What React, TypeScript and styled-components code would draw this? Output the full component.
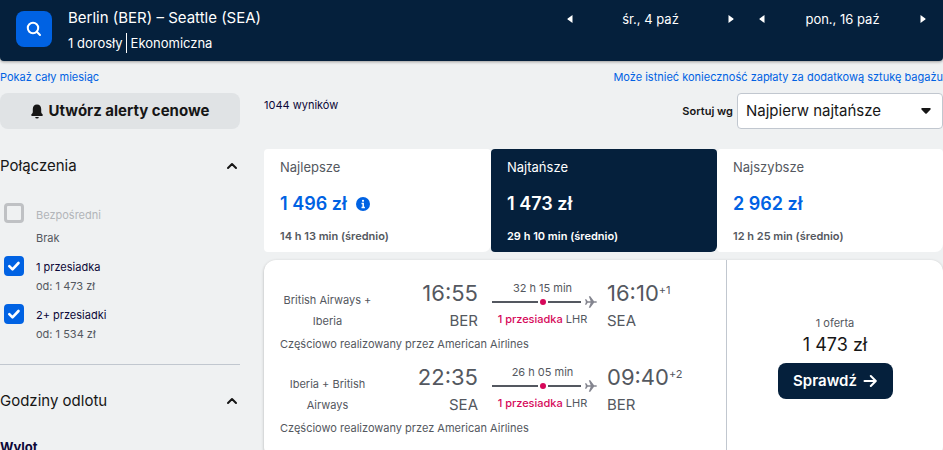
import React from 'react';
import styled, { createGlobalStyle } from 'styled-components';

const color = {
  navy: '#05203c',
  blue: '#0062e3',
  page: '#eff1f2',
  text: '#161616',
  muted: '#545860',
  pink: '#d6085a',
  line: '#c1c7cf',
};

const GlobalStyle = createGlobalStyle`
  *, *::before, *::after { box-sizing: border-box; }
  body {
    margin: 0;
    overflow-x: hidden;
    background: ${color.page};
    color: ${color.text};
    font-family: Inter, "Liberation Sans", sans-serif;
    font-size: 12px;
    line-height: 20px;
  }
  h1, h2, h3, p { margin: 0; font-weight: 400; }
  button, select, input { font: inherit; color: inherit; margin: 0; }
  button { border: 0; padding: 0; background: none; cursor: pointer; }
  svg { display: block; flex: none; }
`;

const Page = styled.div`
  min-height: 100vh;
`;

const Header = styled.header`
  display: flex;
  align-items: flex-start;
  min-height: 61px;
  padding: 6px 12px 6px 16px;
  background: ${color.navy};
  color: #fff;
  border-radius: 0 0 4px 4px;
  box-shadow: 0 1px 3px rgba(37, 32, 31, 0.4);
`;

const SearchButton = styled.button`
  display: grid;
  place-items: center;
  width: 36px;
  height: 36px;
  margin-top: 5px;
  border-radius: 8px;
  background: ${color.blue};
`;

const Trip = styled.div`
  flex: 1;
  margin-left: 16px;
  white-space: nowrap;
`;

const Route = styled.h1`
  font-size: 15px;
  line-height: 24px;
`;

const TripDetails = styled.p`
  display: flex;
  gap: 3px;
  margin-top: 3px;
  font-size: 13px;
`;

const Cabin = styled.span`
  padding-left: 4px;
  border-left: 1px solid #fff;
`;

const Dates = styled.div`
  display: flex;
  gap: 15px;
`;

const DatePicker = styled.div`
  display: flex;
  align-items: center;
  justify-content: space-between;
  width: 177px;
  height: 26px;
  font-size: 13px;
`;

const StepButton = styled.button`
  display: grid;
  place-items: center;
  width: 16px;
  height: 16px;
`;

const LinkRow = styled.nav`
  display: flex;
  justify-content: space-between;
  padding: 6px 0;
  white-space: nowrap;
`;

const TextLink = styled.a`
  color: ${color.blue};
  font-size: 11px;
  text-decoration: none;
`;

const Columns = styled.main`
  display: grid;
  grid-template-columns: 240px minmax(0, 1fr);
  gap: 24px;
`;

const AlertButton = styled.button`
  display: flex;
  align-items: center;
  justify-content: center;
  gap: 6px;
  width: 100%;
  height: 36px;
  border-radius: 8px;
  background: #e0e3e5;
  font-size: 15px;
  font-weight: 700;
`;

const FilterGroup = styled.section`
  padding: 24px 0 20px;
  border-bottom: 1px solid ${color.line};

  &:first-of-type { padding-top: 25px; }
`;

const FilterHeader = styled.button`
  display: flex;
  align-items: center;
  justify-content: space-between;
  width: 100%;
  height: 24px;
  padding-right: 2px;
  font-size: 15px;
`;

const Options = styled.div`
  display: grid;
  gap: 8px;
  padding-top: 25px;
`;

const Option = styled.label`
  display: grid;
  grid-template-columns: 20px 1fr;
  column-gap: 12px;
  padding-left: 4px;
  color: #0c0838;
  font-size: 11px;
`;

const CheckSlot = styled.span`
  display: grid;
  grid-row: 1 / span 2;
  align-self: start;
  place-items: center;
  & > * { grid-area: 1 / 1; }
  svg { pointer-events: none; }
`;

const CheckInput = styled.input`
  appearance: none;
  width: 20px;
  height: 20px;
  border: 3px solid #bfc1c4;
  border-radius: 4px;
  &:checked { border-color: ${color.blue}; background: ${color.blue}; }
`;

const OptionName = styled.span<{ $off?: boolean }>`
  padding-top: ${p => (p.$off ? '2px' : '1px')};
  color: ${p => (p.$off ? '#b2b5b9' : 'inherit')};
  line-height: 20px;
`;

const OptionPrice = styled.span<{ $off?: boolean }>`
  padding-top: ${p => (p.$off ? '3px' : '0')};
  color: ${color.muted};
  line-height: ${p => (p.$off ? '20px' : '19px')};
`;

const Subheading = styled.h3`
  padding-top: 24px;
  color: #0c0838;
  font-size: 13px;
  font-weight: 700;
`;

const Toolbar = styled.div`
  display: flex;
  justify-content: space-between;
  height: 36px;
`;

const ResultCount = styled.p`
  padding-top: 2px;
  color: #0c0838;
  font-size: 11px;
`;

const Sort = styled.div`
  display: flex;
  align-items: center;
  gap: 4px;
`;

const SortLabel = styled.label`
  font-size: 11px;
  font-weight: 600;
`;

const SelectBox = styled.div`
  display: grid;
  align-items: center;
  & > * { grid-area: 1 / 1; }
  svg { justify-self: end; margin-right: 11px; pointer-events: none; }
`;

const Select = styled.select`
  appearance: none;
  width: 206px;
  height: 36px;
  padding: 0 32px 0 8px;
  border: 1px solid ${color.line};
  border-radius: 4px;
  background: #fff;
  font-size: 15px;
`;

const Tabs = styled.div`
  display: grid;
  grid-template-columns: 227fr 226fr 226fr;
  margin-top: 20px;
`;

const Tab = styled.button<{ $active?: boolean }>`
  display: flex;
  flex-direction: column;
  height: 103px;
  padding: 8px 16px 6px;
  border-radius: ${p => (p.$active ? '4px 4px 6px 4px' : '4px 4px 8px 4px')};
  background: ${p => (p.$active ? color.navy : '#fff')};
  color: ${p => (p.$active ? '#fff' : color.muted)};
  text-align: left;
  white-space: nowrap;
`;

const TabName = styled.span`
  font-size: 13px;
`;

const TabPrice = styled.span<{ $active?: boolean }>`
  display: flex;
  align-items: center;
  gap: 9px;
  margin: 15px 0 10px;
  color: ${p => (p.$active ? '#fff' : color.blue)};
  font-size: 18px;
  font-weight: 600;
  line-height: 24px;
`;

const TabTime = styled.span`
  font-size: 11px;
  font-weight: 600;
`;

const Ticket = styled.article`
  display: grid;
  grid-template-columns: minmax(0, 1fr) 217px;
  margin-top: 8px;
  border-radius: 12px;
  background: #fff;
  box-shadow: 0 1px 3px rgba(37, 32, 31, 0.3);
`;

const Legs = styled.div`
  padding: 19px 16px 12px;
  color: ${color.muted};
`;

const Leg = styled.section`
  height: 84px;
`;

const LegRow = styled.div`
  display: grid;
  grid-template-columns: 95px 103px 129px 1fr;
  height: 56px;
`;

const Airlines = styled.p`
  padding: 11px 2px 0;
  font-size: 11px;
  line-height: 21px;
  text-align: center;
`;

const Stop = styled.div`
  white-space: nowrap;
`;

const DepartStop = styled(Stop)`
  text-align: right;
`;

const Time = styled.p`
  font-size: 22px;
  line-height: 28px;
`;

const ArriveTime = styled(Time)`
  display: flex;
`;

const DayShift = styled.sup`
  font-size: 11px;
  line-height: 22px;
`;

const Airport = styled.p`
  font-size: 15px;
  line-height: 28px;
`;

const Journey = styled.div`
  display: flex;
  flex-direction: column;
  padding: 1px 10px 0 14px;
  font-size: 11px;
  white-space: nowrap;
`;

const Duration = styled.p`
  padding-right: 4px;
  line-height: 16px;
  text-align: center;
`;

const StopInfo = styled.p`
  padding-right: 4px;
  line-height: 22px;
  text-align: center;
  b { color: ${color.pink}; font-weight: 500; }
`;

const Note = styled.p`
  font-size: 11px;
  line-height: 18px;
`;

const Offer = styled.div`
  display: flex;
  flex-direction: column;
  align-items: center;
  justify-content: center;
  padding-bottom: 8px;
  border-left: 1px solid ${color.line};
`;

const OfferCount = styled.p`
  color: ${color.muted};
  font-size: 11px;
`;

const OfferPrice = styled.p`
  font-size: 18px;
  line-height: 24px;
`;

const CheckButton = styled.button`
  display: flex;
  align-items: center;
  justify-content: center;
  gap: 6px;
  width: 115px;
  height: 36px;
  margin-top: 6px;
  border-radius: 8px;
  background: ${color.navy};
  color: #fff;
  font-size: 15px;
  font-weight: 600;
`;

const SearchIcon = () => (
  <svg width="16" height="16" viewBox="0 0 16 16" fill="none" stroke="#fff" strokeWidth="2">
    <circle cx="7" cy="7" r="5.2" />
    <path d="M10.800 10.800l3.200 3.200" strokeLinecap="round" />
  </svg>
);

const Triangle = ({ left }: { left?: boolean }) => (
  <svg width="6" height="10" viewBox="0 0 6 10" fill="#fff">
    <path d={left ? 'M5.5 1v8L.7 5.6a.8.8 0 0 1 0-1.2z' : 'M.5 1v8l4.8-3.4a.8.8 0 0 0 0-1.2z'} />
  </svg>
);

const BellIcon = () => (
  <svg width="12" height="15" viewBox="0 0 12 15" fill={color.text}>
    <path d="M6 .5C3.300.5 1.800 2.500 1.800 5v3c0 .7-.3 1.300-.8 1.800l-.6.6c-.6.6-.2 1.600.6 1.600h10c.8 0 1.200-1 .6-1.600l-.6-.6c-.5-.5-.8-1.100-.8-1.800V5C10.200 2.500 8.700.5 6 .5z" />
    <path d="M4.200 13h3.600a1.800 1.600 0 0 1-3.600 0z" />
  </svg>
);

const ChevronUp = () => (
  <svg width="12" height="8" viewBox="0 0 12 8" fill="none" stroke={color.text} strokeWidth="2" strokeLinecap="round" strokeLinejoin="round">
    <path d="M2 6l4-4 4 4" />
  </svg>
);

const CheckIcon = () => (
  <svg width="14" height="12" viewBox="0 0 14 12" fill="none" stroke="#fff" strokeWidth="2.600" strokeLinecap="round" strokeLinejoin="round">
    <path d="M2.300 6.200l3.200 3.200 6-6.400" />
  </svg>
);

const InfoIcon = () => (
  <svg width="14" height="14" viewBox="0 0 14 14">
    <circle cx="7" cy="7" r="7" fill={color.blue} />
    <circle cx="7" cy="3.800" r="1.100" fill="#fff" />
    <path d="M5.500 6.500H7.200v4M5.500 10.500h3.400" stroke="#fff" strokeWidth="1.500" fill="none" />
  </svg>
);

const CaretDown = () => (
  <svg width="12" height="8" viewBox="0 0 12 8" fill={color.text}>
    <path d="M2.200 1h7.600c.9 0 1.300.9.7 1.500L6.700 6.400a1 1 0 0 1-1.400 0L1.500 2.500C.9 1.900 1.300 1 2.200 1z" />
  </svg>
);

const ArrowRight = () => (
  <svg width="14" height="14" viewBox="0 0 14 14" fill="none" stroke="#fff" strokeWidth="2" strokeLinecap="round" strokeLinejoin="round">
    <path d="M1.500 7h11M7.800 2l5 5-5 5" />
  </svg>
);

const FlightPath = () => (
  <svg width="105" height="12" viewBox="0 0 105 12">
    <path d="M0 6h46M56 6h33" stroke={color.muted} strokeWidth="2" />
    <circle cx="51" cy="6" r="3" fill={color.pink} />
    <path
      d="M93 3.200h1.300l1.400 2h3L96.800.3h1.500L102 5.200h2.200c.9 0 .9 1.600 0 1.600H102l-3.700 4.900h-1.500l1.900-4.900h-3l-1.400 2H93L93.900 6z"
      fill="#84858f"
    />
  </svg>
);

const dates = ['śr., 4 paź', 'pon., 16 paź'];

const stops = [
  { name: 'Bezpośredni', price: 'Brak', off: true },
  { name: '1 przesiadka', price: 'od: 1 473 zł' },
  { name: '2+ przesiadki', price: 'od: 1 534 zł' },
];

const tabs = [
  { name: 'Najlepsze', price: '1 496 zł', time: '14 h 13 min (średnio)', info: true },
  { name: 'Najtańsze', price: '1 473 zł', time: '29 h 10 min (średnio)', active: true },
  { name: 'Najszybsze', price: '2 962 zł', time: '12 h 25 min (średnio)' },
];

const legs = [
  { airlines: 'British Airways + Iberia', depart: '16:55', from: 'BER', duration: '32 h 15 min', arrive: '16:10', shift: '+1', to: 'SEA' },
  { airlines: 'Iberia + British Airways', depart: '22:35', from: 'SEA', duration: '26 h 05 min', arrive: '09:40', shift: '+2', to: 'BER' },
];

export default function App() {
  return (
    <Page>
      <GlobalStyle />
      <Header>
        <SearchButton aria-label="Szukaj"><SearchIcon /></SearchButton>
        <Trip>
          <Route>Berlin (BER) – Seattle (SEA)</Route>
          <TripDetails>
            <span>1 dorosły</span>
            <Cabin>Ekonomiczna</Cabin>
          </TripDetails>
        </Trip>
        <Dates>
          {dates.map(date => (
            <DatePicker key={date}>
              <StepButton aria-label="Poprzedni dzień"><Triangle left /></StepButton>
              <span>{date}</span>
              <StepButton aria-label="Następny dzień"><Triangle /></StepButton>
            </DatePicker>
          ))}
        </Dates>
      </Header>

      <LinkRow>
        <TextLink href="#month">Pokaż cały miesiąc</TextLink>
        <TextLink href="#baggage">Może istnieć konieczność zapłaty za dodatkową sztukę bagażu</TextLink>
      </LinkRow>

      <Columns>
        <aside>
          <AlertButton><BellIcon />Utwórz alerty cenowe</AlertButton>
          <FilterGroup>
            <FilterHeader aria-expanded="true">Połączenia<ChevronUp /></FilterHeader>
            <Options>
              {stops.map(stop => (
                <Option key={stop.name}>
                  <CheckSlot>
                    <CheckInput type="checkbox" defaultChecked={!stop.off} disabled={stop.off} />
                    {!stop.off && <CheckIcon />}
                  </CheckSlot>
                  <OptionName $off={stop.off}>{stop.name}</OptionName>
                  <OptionPrice $off={stop.off}>{stop.price}</OptionPrice>
                </Option>
              ))}
            </Options>
          </FilterGroup>
          <FilterGroup>
            <FilterHeader aria-expanded="true">Godziny odlotu<ChevronUp /></FilterHeader>
            <Subheading>Wylot</Subheading>
          </FilterGroup>
        </aside>

        <div>
          <Toolbar>
            <ResultCount>1044 wyników</ResultCount>
            <Sort>
              <SortLabel htmlFor="sort">Sortuj wg</SortLabel>
              <SelectBox>
                <Select id="sort"><option>Najpierw najtańsze</option></Select>
                <CaretDown />
              </SelectBox>
            </Sort>
          </Toolbar>

          <Tabs>
            {tabs.map(tab => (
              <Tab key={tab.name} $active={tab.active}>
                <TabName>{tab.name}</TabName>
                <TabPrice $active={tab.active}>{tab.price}{tab.info && <InfoIcon />}</TabPrice>
                <TabTime>{tab.time}</TabTime>
              </Tab>
            ))}
          </Tabs>

          <Ticket>
            <Legs>
              {legs.map(leg => (
                <Leg key={leg.airlines}>
                  <LegRow>
                    <Airlines>{leg.airlines}</Airlines>
                    <DepartStop>
                      <Time>{leg.depart}</Time>
                      <Airport>{leg.from}</Airport>
                    </DepartStop>
                    <Journey>
                      <Duration>{leg.duration}</Duration>
                      <FlightPath />
                      <StopInfo><b>1 przesiadka</b> LHR</StopInfo>
                    </Journey>
                    <Stop>
                      <ArriveTime>{leg.arrive}<DayShift>{leg.shift}</DayShift></ArriveTime>
                      <Airport>{leg.to}</Airport>
                    </Stop>
                  </LegRow>
                  <Note>Częściowo realizowany przez American Airlines</Note>
                </Leg>
              ))}
            </Legs>
            <Offer>
              <OfferCount>1 oferta</OfferCount>
              <OfferPrice>1 473 zł</OfferPrice>
              <CheckButton>Sprawdź<ArrowRight /></CheckButton>
            </Offer>
          </Ticket>
        </div>
      </Columns>
    </Page>
  );
}
